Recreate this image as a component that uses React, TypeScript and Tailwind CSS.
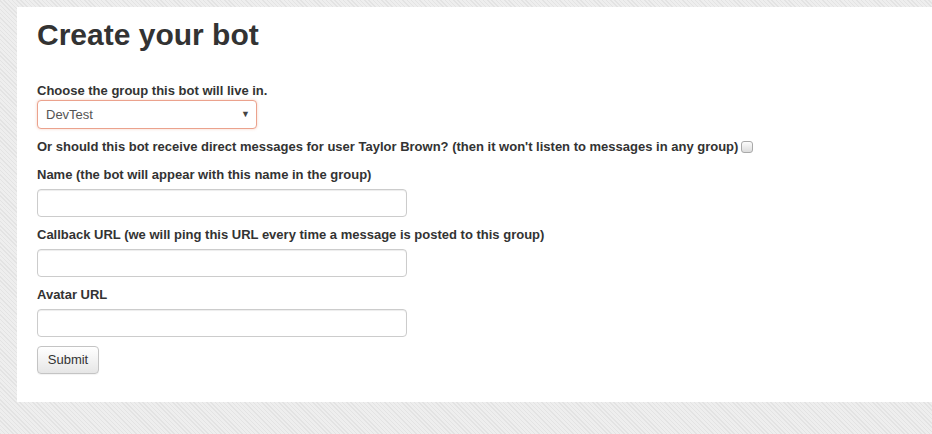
export default function App() {
  const fields = [
    "Name (the bot will appear with this name in the group)",
    "Callback URL (we will ping this URL every time a message is posted to this group)",
    "Avatar URL",
  ]

  return (
    <div
      className="min-h-[434px] w-full overflow-hidden pt-[7px] pl-[17px] bg-[#e9e9e9] bg-[repeating-linear-gradient(45deg,#e3e3e3_0px,#e3e3e3_1px,#eeeeee_1px,#eeeeee_3px)] text-[#333] font-['Liberation_Sans',Arial,sans-serif]"
    >
      <div className="bg-white pl-5 pt-[11px] pb-7 min-h-[395px]">
        <h1 className="text-[30px] leading-[33px] font-bold text-[#333]">Create your bot</h1>

        <form className="mt-[31px]" onSubmit={(e) => e.preventDefault()}>
          {/* Group */}
          <label className="block text-[13px] leading-[18px] font-bold">Choose the group this bot will live in.</label>
          <div className="relative w-[220px] h-[29px] border border-[#eba28d] rounded-[4px] shadow-[0_0_3px_rgba(235,150,120,0.45)] bg-white">
            <select className="appearance-none w-full h-full pl-2 pr-6 pt-[1px] text-[13px] text-[#555] bg-transparent outline-none">
              <option>DevTest</option>
            </select>
            <span className="pointer-events-none absolute right-[6px] top-[7px] text-[9px] text-[#444]">▼</span>
          </div>

          {/* Direct messages */}
          <div className="mt-[9px] flex items-center text-[13px] leading-[18px] font-bold">
            <span>
              Or should this bot receive direct messages for user Taylor Brown? (then it won't listen to messages in any group)
            </span>
            <span className="ml-[3px] w-[12px] h-[12px] rounded-[3px] border border-[#a9a9a9] bg-gradient-to-b from-[#fcfcfc] to-[#dcdcdc]" />
          </div>

          {fields.map((label, i) => (
            <div key={label} className={i === 0 ? "mt-[10px]" : "mt-[9px]"}>
              <label className="block text-[13px] leading-[18px] font-bold">{label}</label>
              <input
                type="text"
                className="mt-[5px] block w-[370px] h-[28px] border border-[#ccc] rounded-[4px] px-2 text-[13px] shadow-[inset_0_1px_1px_rgba(0,0,0,0.075)] outline-none"
              />
            </div>
          ))}

          <button
            type="submit"
            className="mt-[9px] w-[62px] h-[28px] rounded-[4px] border border-[#c4c4c4] bg-gradient-to-b from-white to-[#e6e6e6] text-[13px] text-[#333] shadow-[0_1px_1px_rgba(0,0,0,0.05)]"
          >
            Submit
          </button>
        </form>
      </div>
    </div>
  )
}
